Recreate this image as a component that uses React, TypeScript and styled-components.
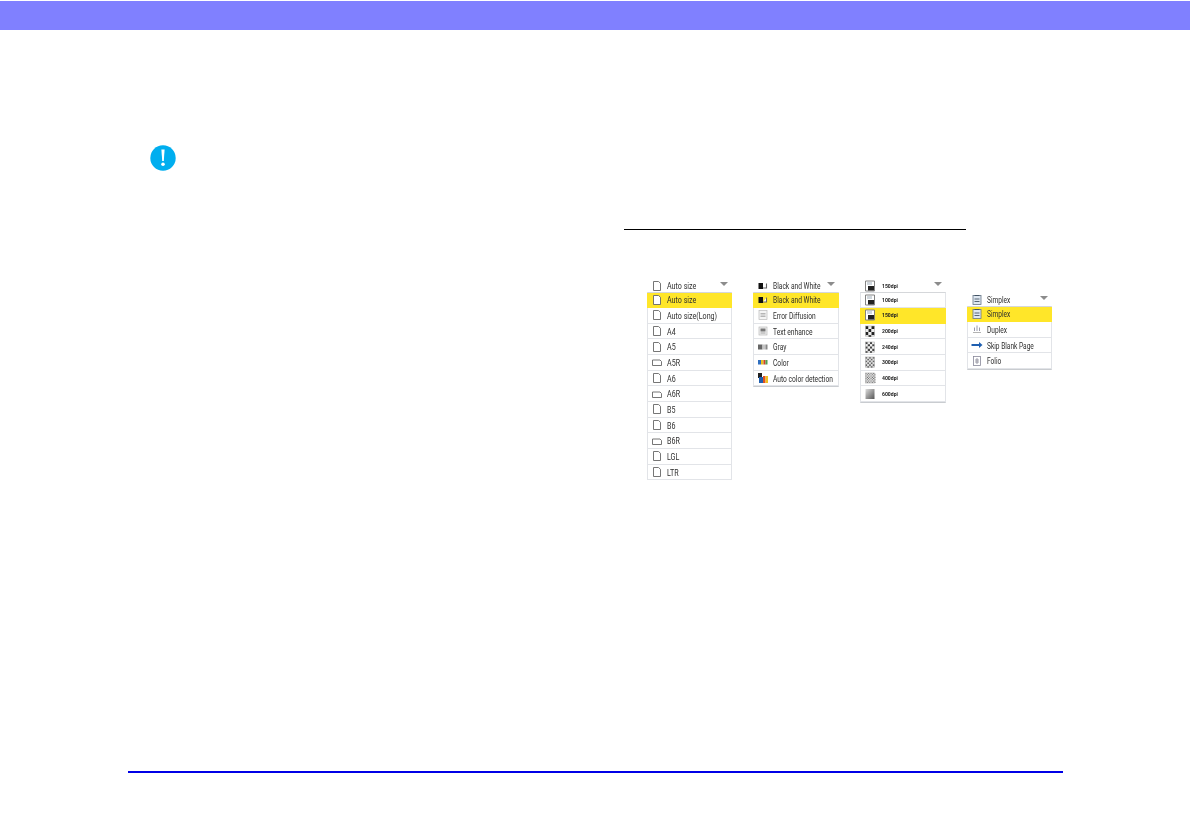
import React from "react";
import styled, { createGlobalStyle } from "styled-components";

const Global = createGlobalStyle`
  html, body { margin: 0; padding: 0; background: #fff; }
  body { font-family: "Roboto", "Liberation Sans", sans-serif; }
`;

const Page = styled.div`
  width: 1190px;
  height: 840px;
  overflow: hidden;
  display: flex;
  flex-direction: column;
  padding-top: 1px;
  box-sizing: border-box;
`;

const Header = styled.header`
  flex: none;
  height: 29px;
  background: #8080ff;
`;

const Main = styled.main`
  flex: none;
  height: 741px;
  display: grid;
  grid-template-columns: 624px 1fr;
`;

const NoteColumn = styled.section`
  padding: 115px 0 0 150px;
`;

const GuideColumn = styled.section`
  padding-top: 199px;
`;

const Rule = styled.div`
  width: 342px;
  height: 1px;
  background: #000;
`;

const Panels = styled.div`
  display: flex;
  align-items: flex-start;
  gap: 21px;
  margin: 49px 0 0 22.67px;
  filter: blur(0.3px);
`;

const Panel = styled.div<{ $drop?: number }>`
  width: 85.67px;
  flex: none;
  margin-top: ${(p) => p.$drop ?? 0}px;
`;

const Selected = styled.div`
  height: 13.5px;
  display: flex;
  align-items: center;
  position: relative;
  padding-left: 4px;
  font-size: 9.4px;
  color: #2e2e2e;
  white-space: nowrap;
`;

const Caret = styled.span`
  position: absolute;
  right: 4px;
  top: 3px;
  width: 0;
  height: 0;
  border-left: 4.5px solid transparent;
  border-right: 4.5px solid transparent;
  border-top: 4.5px solid #8c8c8c;
`;

const List = styled.ul<{ $open?: boolean }>`
  list-style: none;
  margin: -1px 0 0;
  padding: 0;
  border-left: 1px solid #e2e4e8;
  border-right: 1px solid #e2e4e8;
  border-bottom: ${(p) => (p.$open ? "none" : "1px solid #c9ccd0")};
  border-top: 1px solid #d5d7da;
`;

const Row = styled.li<{ $active?: boolean }>`
  height: 15.67px;
  box-sizing: border-box;
  display: flex;
  align-items: center;
  padding-left: ${(p) => (p.$active ? "4px" : "3px")};
  margin: 0 ${(p) => (p.$active ? "-1px" : "0")};
  background: ${(p) => (p.$active ? "#ffe629" : "#fff")};
  border-bottom: 1px solid ${(p) => (p.$active ? "#ffe629" : "#e2e4e8")};
  font-size: 9.4px;
  color: #2e2e2e;
  white-space: nowrap;
`;

const Label = styled.span<{ $tiny?: boolean; $squeeze: number }>`
  display: inline-block;
  margin-left: ${(p) => (p.$tiny ? "6px" : "4px")};
  transform: scaleX(${(p) => p.$squeeze});
  transform-origin: left center;
  ${(p) => p.$tiny && "font-size: 5.8px; font-weight: 700; color: #222;"}
`;

const Footer = styled.div`
  flex: none;
  height: 2px;
  margin-left: 128px;
  width: 935px;
  background: #0000e6;
`;

type Kind =
  | "portrait" | "landscape" | "bw" | "diffusion" | "text" | "gray" | "color" | "auto"
  | "floppy" | "check1" | "check2" | "check3" | "check4" | "grad"
  | "simplex" | "duplex" | "skip" | "folio";

const IconBox = styled.svg`
  flex: none;
  width: 12px;
  height: 12px;
`;

const Icon = ({ kind }: { kind: Kind }) => {
  const checks = (size: number, dark: string, light: string) => {
    const cells: React.ReactNode[] = [];
    for (let y = 1; y < 11; y += size) {
      for (let x = 1.5; x < 10.5; x += size) {
        const on = (Math.round((x - 1.5) / size) + Math.round((y - 1) / size)) % 2 === 0;
        cells.push(<rect key={`${x}-${y}`} x={x} y={y} width={size} height={size} fill={on ? dark : light} />);
      }
    }
    return <>{cells}<rect x="1.5" y="1" width="9" height="10" fill="none" stroke="#aaa" strokeWidth=".6" /></>;
  };
  return (
    <IconBox viewBox="0 0 12 12">
      {kind === "portrait" && <path d="M2.5 1.5h5l2 1.8v7.2h-7z" fill="#fff" stroke="#666" strokeWidth=".9" />}
      {kind === "landscape" && <path d="M1.5 4h7.5l1.5 1.5v4h-9z" fill="#fff" stroke="#666" strokeWidth=".9" />}
      {kind === "bw" && (<><rect x="1.5" y="3" width="4.5" height="6" fill="#111" /><path d="M6 8h3.5V3.5" fill="#fff" stroke="#666" strokeWidth="1.1" /></>)}
      {kind === "diffusion" && (<><rect x="2" y="1.5" width="8" height="9" fill="#f4f4f4" stroke="#bbb" strokeWidth=".7" /><path d="M3.5 4.5h5M3.5 6h5M3.5 7.5h5" stroke="#999" strokeWidth=".7" /></>)}
      {kind === "text" && (<><rect x="2" y="2" width="8" height="8" fill="#eee" stroke="#bbb" strokeWidth=".7" /><rect x="3.5" y="3.5" width="5" height="3" fill="#777" /><path d="M3.5 8h5" stroke="#888" strokeWidth=".7" /></>)}
      {kind === "gray" && (<><rect x="1" y="3.5" width="4.5" height="5" fill="#666" /><rect x="5.5" y="3.5" width="3" height="5" fill="#c4c4c4" /><rect x="8.5" y="3.5" width="2" height="5" fill="#888" /></>)}
      {kind === "color" && (<><rect x="1" y="4" width="3" height="4.5" fill="#2f6fc0" /><rect x="4" y="4" width="2.5" height="4.5" fill="#e8c020" /><rect x="6.5" y="4" width="2" height="4.5" fill="#d04030" /><rect x="8.5" y="4" width="2" height="4.5" fill="#50a050" /></>)}
      {kind === "auto" && (<><rect x="1" y="1" width="4" height="5" fill="#222" /><rect x="2" y="5" width="4" height="6" fill="#1f5fb0" /><rect x="6" y="4" width="2.5" height="7" fill="#e05020" /><rect x="8.5" y="4" width="2.5" height="7" fill="#f0c020" /></>)}
      {kind === "floppy" && (<><path d="M1.5 1h9v10h-9z" fill="#fff" stroke="#777" strokeWidth=".9" /><rect x="4" y="6" width="6" height="4.5" fill="#222" /><rect x="3" y="2" width="5" height="3" fill="#cfd6dc" /></>)}
      {kind === "check1" && checks(3, "#222", "#eee")}
      {kind === "check2" && checks(2.25, "#444", "#eee")}
      {kind === "check3" && checks(1.8, "#666", "#ddd")}
      {kind === "check4" && checks(1.25, "#777", "#ddd")}
      {kind === "grad" && (<><defs><linearGradient id="gr" x1="0" y1="0" x2="1" y2="1"><stop offset="0" stopColor="#ddd" /><stop offset="1" stopColor="#555" /></linearGradient></defs><rect x="1.5" y="1" width="9" height="10" fill="url(#gr)" /></>)}
      {kind === "simplex" && (<><rect x="2" y="1.5" width="8" height="9" fill="#dfe8f2" stroke="#678" strokeWidth=".8" /><path d="M3.5 1.5h5M3.5 5h5M3.5 7.5h5" stroke="#345" strokeWidth=".8" /></>)}
      {kind === "duplex" && (<><path d="M2 9.5h8" stroke="#aaa" strokeWidth=".9" /><path d="M3.5 8V4.5M6 8V2.5M8.5 8V4.5" stroke="#99a" strokeWidth="1" /></>)}
      {kind === "skip" && (<><path d="M.5 6h8" stroke="#1f5fb0" strokeWidth="2" /><path d="M8 3 11.5 6 8 9z" fill="#1f5fb0" /></>)}
      {kind === "folio" && (<><rect x="2.5" y="1.5" width="7" height="9" fill="#fff" stroke="#889" strokeWidth=".8" /><path d="M6 3v6M4 5h4M4 7h4" stroke="#778" strokeWidth=".7" /></>)}
    </IconBox>
  );
};

type Item = { kind: Kind; label: string };

const sizes: Item[] = [
  { kind: "portrait", label: "Auto size" },
  { kind: "portrait", label: "Auto size(Long)" },
  { kind: "portrait", label: "A4" },
  { kind: "portrait", label: "A5" },
  { kind: "landscape", label: "A5R" },
  { kind: "portrait", label: "A6" },
  { kind: "landscape", label: "A6R" },
  { kind: "portrait", label: "B5" },
  { kind: "portrait", label: "B6" },
  { kind: "landscape", label: "B6R" },
  { kind: "portrait", label: "LGL" },
  { kind: "portrait", label: "LTR" },
];
const modes: Item[] = [
  { kind: "bw", label: "Black and White" },
  { kind: "diffusion", label: "Error Diffusion" },
  { kind: "text", label: "Text enhance" },
  { kind: "gray", label: "Gray" },
  { kind: "color", label: "Color" },
  { kind: "auto", label: "Auto color detection" },
];
const dpis: Item[] = [
  { kind: "floppy", label: "100dpi" },
  { kind: "floppy", label: "150dpi" },
  { kind: "check1", label: "200dpi" },
  { kind: "check2", label: "240dpi" },
  { kind: "check3", label: "300dpi" },
  { kind: "check4", label: "400dpi" },
  { kind: "grad", label: "600dpi" },
];
const sides: Item[] = [
  { kind: "simplex", label: "Simplex" },
  { kind: "duplex", label: "Duplex" },
  { kind: "skip", label: "Skip Blank Page" },
  { kind: "folio", label: "Folio" },
];

type DropdownProps = { items: Item[]; active: number; squeeze: number; drop?: number; open?: boolean; tiny?: boolean };

const Dropdown = ({ items, active, squeeze, drop, open, tiny }: DropdownProps) => (
  <Panel $drop={drop}>
    <Selected>
      <Icon kind={items[active].kind} />
      <Label $tiny={tiny} $squeeze={squeeze}>{items[active].label}</Label>
      <Caret />
    </Selected>
    <List $open={open}>
      {items.map((it, i) => (
        <Row key={it.label} $active={i === active}>
          <Icon kind={it.kind} />
          <Label $tiny={tiny} $squeeze={squeeze}>{it.label}</Label>
        </Row>
      ))}
    </List>
  </Panel>
);

const NoteIcon = styled.svg`
  display: block;
  width: 26px;
  height: 26px;
`;

export default function App() {
  return (
    <Page>
      <Global />
      <Header />
      <Main>
        <NoteColumn>
          <NoteIcon viewBox="0 0 26 26">
            <circle cx="13" cy="13" r="12.7" fill="#00aeef" />
            <path d="M11.4 4.5h3.2l-.8 11.5h-1.6z" fill="#fff" />
            <circle cx="13" cy="19.3" r="1.8" fill="#fff" />
          </NoteIcon>
        </NoteColumn>
        <GuideColumn>
          <Rule />
          <Panels>
            <Dropdown items={sizes} active={0} squeeze={0.76} open />
            <Dropdown items={modes} active={0} squeeze={0.71} />
            <Dropdown items={dpis} active={1} squeeze={0.88} tiny />
            <Dropdown items={sides} active={0} squeeze={0.7} drop={14} />
          </Panels>
        </GuideColumn>
      </Main>
      <Footer />
    </Page>
  );
}
